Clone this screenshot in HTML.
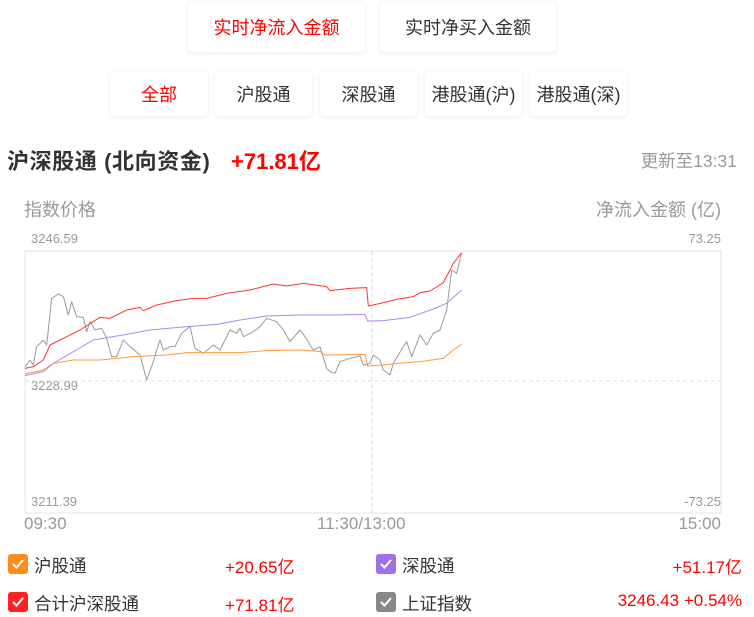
<!DOCTYPE html>
<html><head><meta charset="utf-8"><style>
*{margin:0;padding:0;box-sizing:border-box}
body{width:754px;height:617px;background:#fff;font-family:"Liberation Sans","Noto Sans CJK SC",sans-serif;position:relative;overflow:hidden;color:#333}
.b{position:absolute;background:#fff;border-radius:4px;box-shadow:0 1px 5px rgba(0,0,0,.09);display:flex;align-items:center;justify-content:center;font-size:18px;color:#333}
.r{color:#f00}
.t{position:absolute;white-space:nowrap}
.g{color:#999}
.cb{position:absolute;width:20px;height:20px;border-radius:3px;left:8px}
.cb svg{position:absolute;left:3px;top:4px}
</style></head><body>
<div class="b r" style="left:188px;top:2px;width:177px;height:50px">实时净流入金额</div>
<div class="b" style="left:380px;top:2px;width:176px;height:50px">实时净买入金额</div>
<div class="b r" style="left:110px;top:72px;width:98px;height:44px">全部</div>
<div class="b" style="left:215px;top:72px;width:97px;height:44px">沪股通</div>
<div class="b" style="left:320px;top:72px;width:97px;height:44px">深股通</div>
<div class="b" style="left:425px;top:72px;width:97px;height:44px">港股通(沪)</div>
<div class="b" style="left:530px;top:72px;width:97px;height:44px">港股通(深)</div>
<div class="t" style="left:7px;top:144px;font-size:22px;font-weight:bold;color:#333;letter-spacing:0.6px">沪深股通 (北向资金)</div>
<div class="t" style="left:231px;top:144px;font-size:22px;font-weight:bold;color:#f00">+71.81亿</div>
<div class="t g" style="right:17px;top:148px;font-size:17.5px">更新至13:31</div>
<div class="t g" style="left:24px;top:196px;font-size:18px">指数价格</div>
<div class="t g" style="right:33px;top:196px;font-size:18px">净流入金额 (亿)</div>
<div class="t g" style="left:31px;top:231px;font-size:13px">3246.59</div>
<div class="t g" style="left:31px;top:378px;font-size:13px">3228.99</div>
<div class="t g" style="left:31px;top:494px;font-size:13px">3211.39</div>
<div class="t g" style="right:33px;top:231px;font-size:13px">73.25</div>
<div class="t g" style="right:33px;top:494px;font-size:13px">-73.25</div>
<div class="t g" style="left:24px;top:514px;font-size:17px">09:30</div>
<div class="t g" style="left:317px;top:514px;font-size:17px">11:30/13:00</div>
<div class="t g" style="right:33px;top:514px;font-size:17px">15:00</div>
<svg style="position:absolute;left:0;top:230px" width="754" height="290" viewBox="0 0 2262 870">
<rect x="75" y="63" width="2088" height="786" fill="none" stroke="#e6e6e6" stroke-width="3"/>
<line x1="75" y1="453" x2="2163" y2="453" stroke="#ddd" stroke-width="3" stroke-dasharray="12 9"/>
<line x1="1116" y1="63" x2="1116" y2="849" stroke="#ddd" stroke-width="3" stroke-dasharray="12 9"/>
<g fill="none" stroke-width="3" stroke-linejoin="round">
<polyline stroke="#999" points="75,410 90,390 100,405 110,350 130,330 140,345 155,205 175,192 190,200 205,255 215,215 230,260 250,262 260,305 270,275 285,300 305,295 320,325 335,380 350,380 370,330 390,350 420,375 440,450 460,395 470,360 480,330 490,360 510,350 525,350 545,310 570,290 585,355 610,370 640,345 660,360 690,300 710,310 720,295 730,320 760,305 780,290 800,265 830,275 850,300 870,335 900,300 915,320 940,360 960,350 980,415 990,425 1005,430 1020,395 1050,385 1080,378 1090,405 1110,400 1120,375 1140,390 1150,420 1170,435 1180,400 1210,350 1220,335 1235,380 1260,315 1280,345 1300,310 1320,300 1340,240 1355,120 1370,130 1385,68"/>
<polyline stroke="#ff9a3a" points="75,432 130,420 160,400 220,390 300,390 400,380 500,375 560,368 650,368 720,368 800,362 900,360 960,365 975,375 1095,373 1103,408 1150,405 1190,400 1260,395 1330,385 1360,360 1385,343"/>
<polyline stroke="#b088f0" points="75,437 130,425 160,400 220,365 280,330 320,323 380,313 450,300 560,290 650,283 720,270 800,258 900,255 1000,255 1095,253 1103,273 1150,272 1230,262 1300,237 1340,220 1385,180"/>
<polyline stroke="#ff3333" points="75,415 100,410 130,390 150,345 200,320 240,300 300,262 330,265 380,240 420,232 430,242 470,225 530,212 580,205 620,205 680,190 750,180 820,162 860,168 910,160 980,170 990,182 1050,175 1100,173 1105,228 1150,218 1190,208 1240,200 1260,188 1290,183 1330,158 1360,100 1385,68"/>
</g></svg>
<div class="cb" style="top:554px;background:#ff8c1a"><svg width="14" height="12"><path d="M2 6l3.5 3.5L12 2" stroke="#fff" stroke-width="2" fill="none"/></svg></div>
<div class="t" style="left:34px;top:553px;font-size:17.5px">沪股通</div>
<div class="t r" style="left:225px;top:553px;font-size:17px">+20.65亿</div>
<div class="cb" style="left:376px;top:554px;background:#a070e8"><svg width="14" height="12"><path d="M2 6l3.5 3.5L12 2" stroke="#fff" stroke-width="2" fill="none"/></svg></div>
<div class="t" style="left:402px;top:553px;font-size:17.5px">深股通</div>
<div class="t r" style="right:12px;top:553px;font-size:17px">+51.17亿</div>
<div class="cb" style="top:592px;background:#f22"><svg width="14" height="12"><path d="M2 6l3.5 3.5L12 2" stroke="#fff" stroke-width="2" fill="none"/></svg></div>
<div class="t" style="left:34px;top:591px;font-size:17.5px">合计沪深股通</div>
<div class="t r" style="left:225px;top:591px;font-size:17px">+71.81亿</div>
<div class="cb" style="left:376px;top:592px;background:#888"><svg width="14" height="12"><path d="M2 6l3.5 3.5L12 2" stroke="#fff" stroke-width="2" fill="none"/></svg></div>
<div class="t" style="left:402px;top:591px;font-size:17.5px">上证指数</div>
<div class="t r" style="right:12px;top:591px;font-size:17px">3246.43 +0.54%</div>
</body></html>
